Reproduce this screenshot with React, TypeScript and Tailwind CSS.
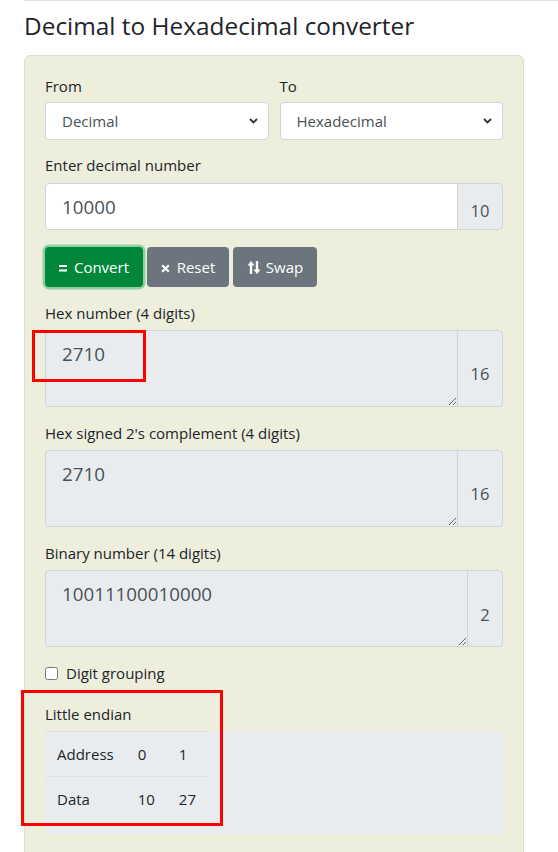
import { ReactNode } from 'react';

function Chevron() {
  return (
    <svg width="9" height="6" viewBox="0 0 9 6" className="shrink-0">
      <path d="M1 1l3.5 3.5L8 1" fill="none" stroke="#333" strokeWidth="1.8" />
    </svg>
  );
}

function FakeSelect({ value }: { value: string }) {
  return (
    <div className="h-[38px] flex items-center justify-between pl-4 pr-[10px] bg-white border border-[#ced4da] rounded-[4px] text-[15px] text-[#495057]">
      <span>{value}</span>
      <Chevron />
    </div>
  );
}

function Addon({ children, w, pt }: { children: ReactNode; w: string; pt: string }) {
  return (
    <div className={`${w} ${pt} -ml-px flex items-center justify-center bg-[#e9ecef] border border-[#ced4da] rounded-r-[4px] text-[16.5px] text-[#495057]`}>
      {children}
    </div>
  );
}

function OutputField({ label, value, base }: { label: string; value: string; base: string }) {
  return (
    <div className="mb-[14px]">
      <label className="block mb-[5px] leading-6 text-[15px]">{label}</label>
      <div className="flex h-[77px]">
        <textarea
          readOnly
          value={value}
          className="flex-1 min-w-0 pl-4 pt-2 bg-[#e9ecef] border border-[#ced4da] rounded-l-[4px] text-[18.75px] leading-[30px] text-[#495057] outline-none"
        />
        {base === '2' ? (
          <Addon w="w-[36px]" pt="pt-[14px]">{base}</Addon>
        ) : (
          <Addon w="w-[46px]" pt="pt-[11px]">{base}</Addon>
        )}
      </div>
    </div>
  );
}

export default function App() {
  return (
    <div className="relative min-h-screen bg-white font-['Open_Sans',sans-serif] text-[#212529]">
      <div className="ml-6 border-t border-[#dee2e6]">
        <h2 className="pt-[10px] mb-[15px] text-[24.4px] leading-[1.2] font-normal">Decimal to Hexadecimal converter</h2>

        <div className="w-[500px] bg-[#eeeedd] border border-[#dfdfcf] rounded-[6px] px-5 pt-[18px] pb-10">
          <div className="grid grid-cols-2 gap-[11px]">
            <div>
              <label className="block mb-1 leading-6 text-[15px]">From</label>
              <FakeSelect value="Decimal" />
            </div>
            <div>
              <label className="block mb-1 leading-6 text-[15px]">To</label>
              <FakeSelect value="Hexadecimal" />
            </div>
          </div>

          <label className="block mt-[13px] mb-[6px] leading-6 text-[15px]">Enter decimal number</label>
          <div className="flex h-[47px]">
            <input
              readOnly
              value="10000"
              className="flex-1 min-w-0 pl-4 bg-white border border-[#ced4da] rounded-l-[4px] text-[18.75px] text-[#495057] outline-none"
            />
            <Addon w="w-[46px]" pt="pt-[10px]">10</Addon>
          </div>

          <div className="flex gap-1 mt-[17px] mb-[14px]">
            <button className="w-[98px] h-[40px] flex items-center justify-center gap-[7px] bg-[#00873c] text-white text-[15px] rounded-[4px] ring-[2.5px] ring-[#8fd0a6]">
              <svg width="8" height="7" viewBox="0 0 8 7" className="mt-[3px]">
                <rect x="0" y="0" width="8" height="2" fill="white" />
                <rect x="0" y="4.5" width="8" height="2" fill="white" />
              </svg>
              Convert
            </button>
            <button className="w-[82px] h-[40px] flex items-center justify-center gap-[7px] bg-[#6c757d] text-white text-[15px] rounded-[4px]">
              <svg width="9" height="9" viewBox="0 0 9 9" className="mt-[2px]">
                <path d="M1.2 1.2l6.6 6.6M7.8 1.2L1.2 7.8" stroke="white" strokeWidth="2.2" />
              </svg>
              Reset
            </button>
            <button className="w-[84px] h-[40px] flex items-center justify-center gap-[5px] bg-[#6c757d] text-white text-[15px] rounded-[4px]">
              <svg width="14" height="15" viewBox="0 0 14 15" className="mt-[1px]">
                <path d="M4 1L0.5 5.5h7z" fill="white" />
                <rect x="2.8" y="4.5" width="2.4" height="9.5" fill="white" />
                <path d="M10 14l3.5-4.5h-7z" fill="white" />
                <rect x="8.8" y="1" width="2.4" height="9.5" fill="white" />
              </svg>
              Swap
            </button>
          </div>

          <OutputField label="Hex number (4 digits)" value="2710" base="16" />
          <OutputField label="Hex signed 2's complement (4 digits)" value="2710" base="16" />
          <OutputField label="Binary number (14 digits)" value="10011100010000" base="2" />

          <div className="flex items-center gap-[8px] h-6 mt-[1px]">
            <input type="checkbox" className="w-[13px] h-[13px] m-0" />
            <span className="text-[15px] leading-6">Digit grouping</span>
          </div>

          <label className="block mt-[17px] mb-[5px] leading-6 text-[15px]">Little endian</label>
          <div className="bg-[#e9ecef] pb-[13px]">
            <table className="text-[15px] leading-6 border-collapse">
              <tbody>
                <tr className="border-t border-[#dee2e6]">
                  <td className="px-3 py-[10px]">Address</td>
                  <td className="px-3 py-[10px]">0</td>
                  <td className="px-3 py-[10px]">1</td>
                </tr>
                <tr className="border-t border-[#dee2e6]">
                  <td className="px-3 py-[10px]">Data</td>
                  <td className="px-3 py-[10px]">10</td>
                  <td className="px-3 py-[10px]">27</td>
                </tr>
              </tbody>
            </table>
          </div>
        </div>
      </div>

      <div className="absolute left-[32px] top-[330px] w-[114px] h-[52px] border-[3px] border-[#ff0000]" />
      <div className="absolute left-[21px] top-[690px] w-[202px] h-[136px] border-[3px] border-[#ff0000]" />
    </div>
  );
}
